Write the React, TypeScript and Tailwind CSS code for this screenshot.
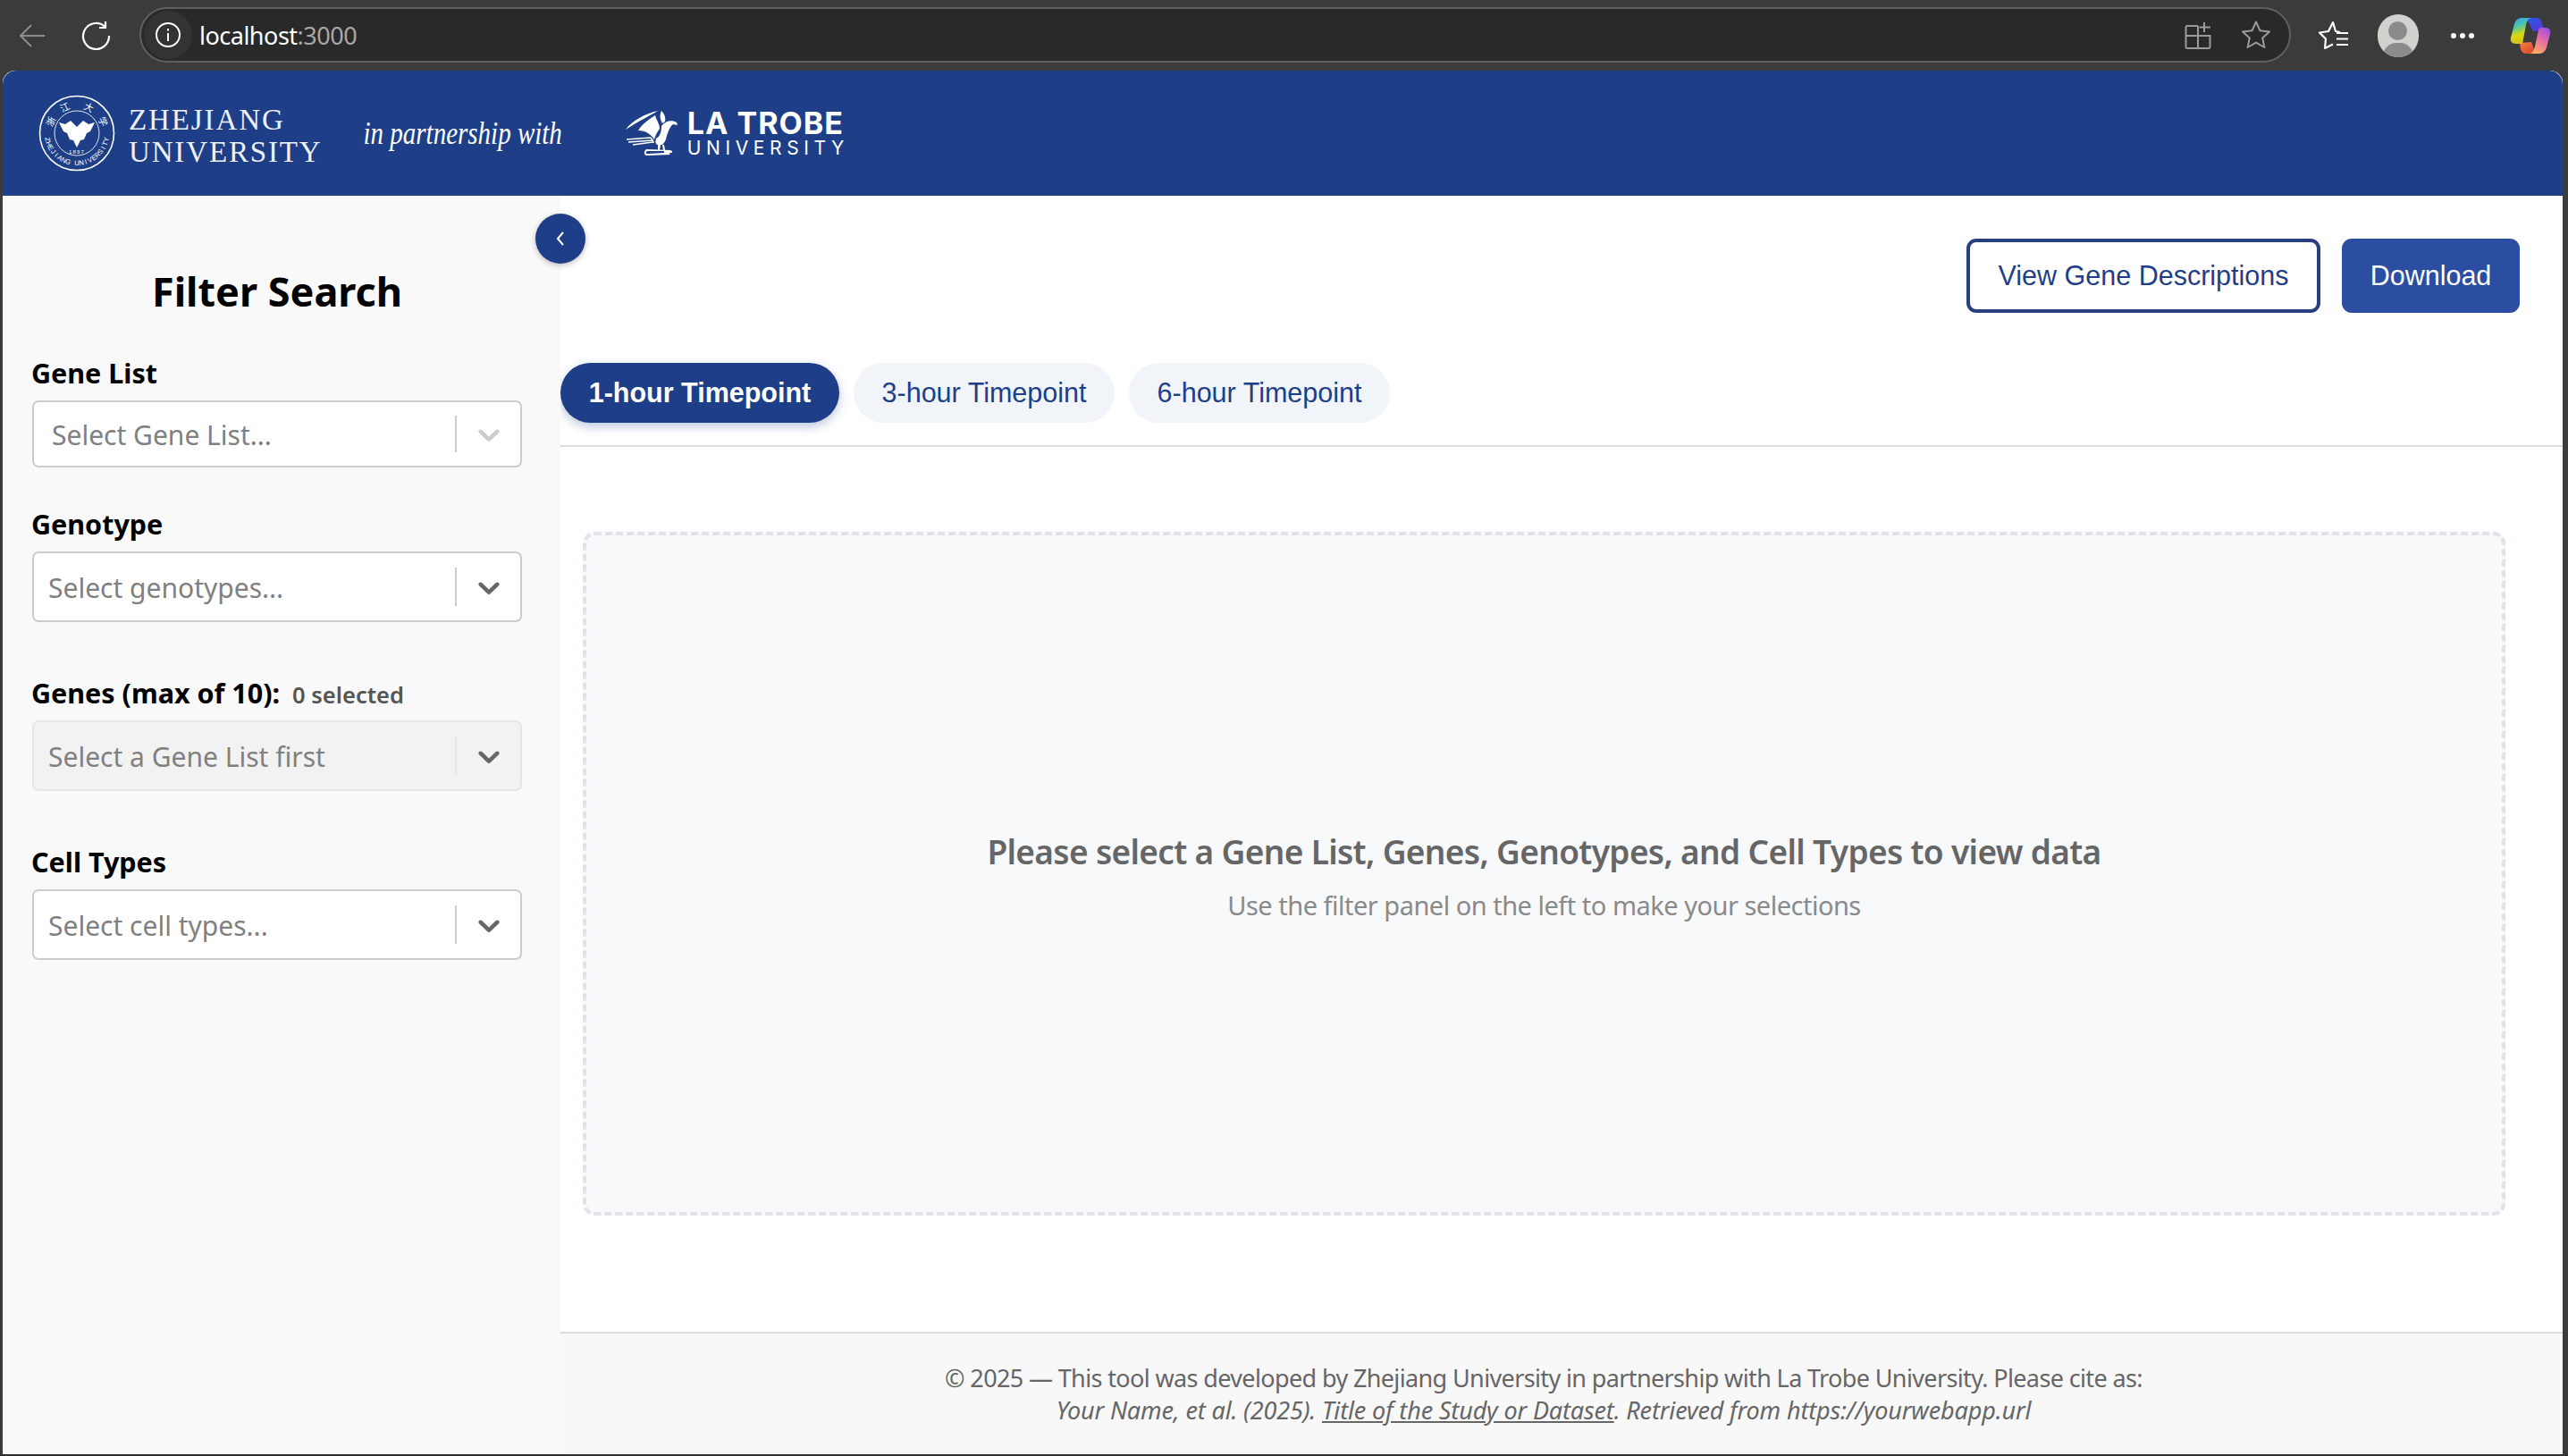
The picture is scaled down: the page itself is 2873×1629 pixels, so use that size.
import React from "react";

const noto = "font-['Noto_Sans','Open_Sans',sans-serif]";
const arial = "font-['Liberation_Sans',Arial,sans-serif]";

function Chevron({ light }: { light?: boolean }) {
  return (
    <svg width="40" height="40" viewBox="0 0 20 20" fill={light ? "#cccccc" : "#666666"}>
      <path d="M4.516 7.548c.436-.446 1.043-.481 1.576 0L10 11.295l3.908-3.747c.533-.481 1.141-.446 1.574 0 .436.445.408 1.197 0 1.615-.406.418-4.695 4.502-4.695 4.502a1.095 1.095 0 0 1-1.576 0S4.924 9.581 4.516 9.163c-.409-.418-.436-1.17 0-1.615z" />
    </svg>
  );
}

function Select({ text, h, pad, light, disabled }: { text: string; h: string; pad: string; light?: boolean; disabled?: boolean }) {
  return (
    <div className={`flex ${h} w-[548px] items-center rounded-[7px] border-2 ${disabled ? "border-[#e6e6e6] bg-[#f2f2f2]" : "border-[#cccccc] bg-white"}`}>
      <span className={`flex-1 ${pad} pt-[2px] text-[30px] leading-[40px] text-[#808080]`}>{text}</span>
      <span className={`h-[58%] w-[2px] ${disabled ? "bg-[#e6e6e6]" : "bg-[#cccccc]"}`} />
      <span className="flex w-[71px] items-center justify-center"><Chevron light={light} /></span>
    </div>
  );
}

function Label({ children }: { children: React.ReactNode }) {
  return <div className="mb-[9px] ml-[-1px] flex h-[40px] items-center pb-[2px] text-[30.5px] font-bold text-black">{children}</div>;
}

const sealName = "ZHEJIANG UNIVERSITY".split("");
const sealCjk: [string, number][] = [["浙", -66], ["江", -25], ["大", 25], ["学", 66]];

function Seal() {
  return (
    <svg width="86" height="86" viewBox="0 0 86 86" className="shrink-0">
      <circle cx="43" cy="43" r="41.5" fill="none" stroke="#fff" strokeWidth="1.6" />
      <circle cx="43" cy="43" r="25" fill="none" stroke="#fff" strokeWidth="1" opacity="0.85" />
      {sealCjk.map(([c, a]) => (
        <text key={c} x="43" y="15" transform={`rotate(${a} 43 43)`} fill="#fff" fontSize="10.5" textAnchor="middle" fontFamily="'Noto Sans CJK SC',sans-serif">{c}</text>
      ))}
      {sealName.map((c, i) => (
        <text key={i} x="43" y="79" transform={`rotate(${78 - i * 8.67} 43 43)`} fill="#fff" fontSize="7.6" textAnchor="middle" fontFamily="'Liberation Sans',sans-serif">{c}</text>
      ))}
      <text x="43" y="66" fill="#fff" fontSize="6" textAnchor="middle" letterSpacing="1.2" fontFamily="'Liberation Sans',sans-serif">1897</text>
      <path fill="#fff" d="M23 31 L30 33 L36 29 L43 36 L50 29 L56 33 L63 31 L58 41 L54 43 L51 50 L47 51 L43 59 L39 51 L35 50 L32 43 L28 41 Z" />
    </svg>
  );
}

function Eagle() {
  return (
    <svg width="62" height="50" viewBox="0 0 62 50" className="shrink-0">
      <g fill="#fff">
        <path d="M0 21 C7 11 22 3 36 0 C28 5 15 11 0 21 Z" />
        <path d="M14 22 C20 13 27 9 33 5 C34 10 38 14 38 20 C35 24 33 28 32 32 C28 26 22 22 14 22 Z" />
        <path d="M40 0 C43 3 45 7 44 12 L41 14 C38 9 38 4 40 0 Z" />
        <path d="M40 17 C44 11 52 10 57 13 L58 16 L53 15 C50 17 48 22 46 28 C45 33 43 36 41 38 L35 38 C33 36 33 34 34 31 C38 29 40 24 40 17 Z" />
        <path d="M36 38 L39 38 L38 44 L36 44 Z M41 38 L43 38 L44 44 L42 44 Z" />
        <path d="M23 43 L50 44 C53 45 53 47 50 47 C48 47 49 48 50 49 L24 50 C20 50 20 45 23 43 Z M24 45 C22 46 22 48 25 48 L43 47 L43 45 Z" fillRule="evenodd" />
      </g>
      <g stroke="#fff" strokeWidth="1.6" fill="none">
        <path d="M1 32 L28 30 M3 35 L30 33 M8 38 L30 35 M28 30 C30 32 31 34 31 36" />
      </g>
    </svg>
  );
}

function Copilot() {
  return (
    <svg width="46" height="44" viewBox="0 0 46 44">
      <defs>
        <linearGradient id="cpA" x1="0" y1="0" x2="0.25" y2="1">
          <stop offset="0" stopColor="#3b9bf5" />
          <stop offset="0.38" stopColor="#4bc6a8" />
          <stop offset="0.7" stopColor="#d8d810" />
          <stop offset="1" stopColor="#d8c020" />
        </linearGradient>
        <linearGradient id="cpB" x1="0.8" y1="0" x2="0.3" y2="1">
          <stop offset="0" stopColor="#a04fe0" />
          <stop offset="0.5" stopColor="#e870a0" />
          <stop offset="1" stopColor="#fbb060" />
        </linearGradient>
        <linearGradient id="cpC" x1="0" y1="0" x2="1" y2="1">
          <stop offset="0" stopColor="#2060e8" />
          <stop offset="1" stopColor="#6030d0" />
        </linearGradient>
        <linearGradient id="cpD" x1="0" y1="0" x2="1" y2="1">
          <stop offset="0" stopColor="#f08040" />
          <stop offset="1" stopColor="#d83a30" />
        </linearGradient>
      </defs>
      <path fill="url(#cpC)" d="M14 2 H29 C33 2 35 4 36 8 L39 16 L26 17 L22 9 C21 6 19 3 14 2 Z" />
      <path fill="url(#cpD)" d="M11 30 L24 29 L27 37 C28 39 30 41 32 42 H19 C15 42 13 40 12 37 Z" />
      <path fill="url(#cpA)" d="M13 2 H24 C20 3 19 6 18 10 L14 31 H7 C2 31 0 28 1 24 L5 9 C6 5 9 2 13 2 Z" />
      <path fill="url(#cpB)" d="M34 13 H40 C44 13 46 16 45 20 L41 35 C40 39 37 42 33 42 H22 C26 41 27 38 28 34 L31 20 C32 16 32 14 34 13 Z" />
    </svg>
  );
}

function Browser() {
  return (
    <div className="flex h-[79px] shrink-0 items-center text-white">
      <svg className="ml-[20px]" width="32" height="32" viewBox="0 0 32 32" fill="none" stroke="#8c8c8c" strokeWidth="2">
        <path d="M30 16 H3 M15 4 L3 16 L15 28" />
      </svg>
      <svg className="ml-[39px]" width="34" height="34" viewBox="0 0 34 34" fill="none" stroke="#fff" strokeWidth="2.2">
        <path d="M26 6.5 A14.5 14.5 0 1 0 31 17" />
        <path d="M27 1 V8 H20" />
      </svg>
      <div className="mb-[1px] ml-[31px] flex h-[62px] w-[2407px] items-center rounded-full border-2 border-[#5f5f5f] bg-[#292929]">
        <div className="ml-[3px] flex h-[54px] w-[54px] items-center justify-center rounded-full bg-[#333333]">
          <svg width="30" height="30" viewBox="0 0 30 30" fill="none" stroke="#fff" strokeWidth="2">
            <circle cx="15" cy="15" r="13" />
            <path d="M15 13 V22 M15 8 V10.5" />
          </svg>
        </div>
        <span className={`ml-[8px] text-[27px] leading-none tracking-[-0.5px] ${noto}`}>
          localhost<span className="text-[#a8a8a8]">:3000</span>
        </span>
        <div className="ml-auto mr-[20px] flex items-center gap-[33px]">
          <svg width="30" height="32" viewBox="0 0 30 32" fill="none" stroke="#9a9a9a" strokeWidth="2">
            <path d="M15 6 H3 Q1.5 6 1.5 7.5 V29 Q1.5 31 3 31 H27 Q28.5 31 28.5 29 V17 H1.5 M15 6 V31" />
            <path d="M22 2 V13 M16.5 7.5 H29" />
          </svg>
          <svg width="34" height="34" viewBox="0 0 34 34" fill="none" stroke="#9a9a9a" strokeWidth="2" strokeLinejoin="round">
            <path d="M17 2.5 L21.4 12.2 L32 13.4 L24.2 20.5 L26.4 31 L17 25.7 L7.6 31 L9.8 20.5 L2 13.4 L12.6 12.2 Z" />
          </svg>
        </div>
      </div>
      <svg className="ml-[31px]" width="34" height="34" viewBox="0 0 34 34" fill="none" stroke="#fff" strokeWidth="2.2" strokeLinejoin="round">
        <path d="M24 13 L19 12 L16 2 L11 12 L1 13.5 L8 20.5 L7 31 L16 26.5" />
        <path d="M20 14 H33 M20 20.5 H33 M20 27 H33" />
      </svg>
      <div className="relative ml-[32px] h-[48px] w-[46px] overflow-hidden rounded-full bg-[#d1d1cd]">
        <div className="absolute left-[12px] top-[8px] h-[21px] w-[21px] rounded-full bg-[#8b8b89]" />
        <div className="absolute left-[6px] top-[32px] h-[30px] w-[34px] rounded-full bg-[#8b8b89]" />
      </div>
      <div className="ml-[36px] flex gap-[4px]">
        <span className="h-[6px] w-[6px] rounded-full bg-white" />
        <span className="h-[6px] w-[6px] rounded-full bg-white" />
        <span className="h-[6px] w-[6px] rounded-full bg-white" />
      </div>
      <div className="ml-[40px]"><Copilot /></div>
    </div>
  );
}

function Header() {
  return (
    <header className="flex h-[140px] shrink-0 items-center rounded-t-[15px] bg-[#1e3f87] pl-[40px] text-white">
      <Seal />
      <div className="ml-[15px] mt-[6px] font-['Liberation_Serif',serif] text-[33px] leading-[36px] text-[#eef1f8]">
        <div className="tracking-[1.9px]">ZHEJIANG</div>
        <div className="tracking-[1.85px]">UNIVERSITY</div>
      </div>
      <div className="ml-[46px] scale-y-[1.2] whitespace-nowrap font-['Liberation_Serif',serif] text-[29px] italic leading-none">in partnership with</div>
      <div className="ml-[71px]"><Eagle /></div>
      <div className="ml-[7px] font-['Inter',sans-serif] text-white">
        <div className="text-[34px] font-bold leading-[34px] tracking-[1px]">LA TROBE</div>
        <div className="text-[21px] font-normal leading-[22px] tracking-[5.6px]">UNIVERSITY</div>
      </div>
    </header>
  );
}

function Sidebar() {
  return (
    <aside className={`relative w-[624px] shrink-0 bg-[#f9f9f9] pl-[33px] pt-[79px] ${noto}`}>
      <button className="absolute right-[-28px] top-[20px] z-10 flex h-[56px] w-[56px] items-center justify-center rounded-full bg-[#1e3f87] shadow-[0_2px_6px_rgba(0,0,0,0.25)]">
        <svg width="14" height="18" viewBox="0 0 14 18" fill="none" stroke="#fff" strokeWidth="2">
          <path d="M10 2 L4 9 L10 16" />
        </svg>
      </button>
      <h2 className="h-[56px] w-[548px] text-center text-[45px] font-bold leading-[56px] text-black">Filter Search</h2>
      <div className="mt-[45px]">
        <Label>Gene List</Label>
        <Select text="Select Gene List..." h="h-[75px]" pad="pl-[20px]" light />
      </div>
      <div className="mt-[45px]">
        <Label>Genotype</Label>
        <Select text="Select genotypes..." h="h-[79px]" pad="pl-[16px]" />
      </div>
      <div className="mt-[61px]">
        <Label>
          Genes (max of 10):
          <span className="ml-[14px] mt-[2px] text-[25.5px] font-semibold text-[#555555]">0 selected</span>
        </Label>
        <Select text="Select a Gene List first" h="h-[79px]" pad="pl-[16px]" disabled />
      </div>
      <div className="mt-[61px]">
        <Label>Cell Types</Label>
        <Select text="Select cell types..." h="h-[79px]" pad="pl-[16px]" />
      </div>
    </aside>
  );
}

function Tab({ label, active }: { label: string; active?: boolean }) {
  return (
    <button className={`h-[67px] w-[292px] rounded-full text-[30.5px] ${active ? "w-[312px] bg-[#1e3f87] font-bold text-white shadow-[0_4px_12px_rgba(30,63,135,0.3)]" : "bg-[#f1f4f9] text-[#1e3f87]"}`}>
      {label}
    </button>
  );
}

function Main() {
  return (
    <main className="flex min-w-0 flex-1 flex-col bg-white">
      <div className={`flex justify-end gap-[24px] pr-[48px] pt-[48px] ${arial}`}>
        <button className="h-[83px] w-[396px] rounded-[11px] border-[4px] border-[#2a3f80] bg-white text-[30.5px] text-[#1e3f87]">View Gene Descriptions</button>
        <button className="h-[83px] w-[199px] rounded-[11px] bg-[#2b4ea3] text-[30.5px] text-white">Download</button>
      </div>
      <div className={`mt-[56px] flex gap-[16px] border-b-2 border-[#dddddd] pb-[25px] ${arial}`}>
        <Tab label="1-hour Timepoint" active />
        <Tab label="3-hour Timepoint" />
        <Tab label="6-hour Timepoint" />
      </div>
      <div className={`ml-[25px] mr-[64px] mt-[95px] flex h-[765px] flex-col items-center justify-center rounded-[13px] border-[4px] border-dashed border-[#e0e3e8] bg-[#f8f9fb] pt-[7px] ${noto}`}>
        <div className="text-[37px] font-semibold leading-[48px] tracking-[-0.65px] text-[#666666]">
          Please select a Gene List, Genes, Genotypes, and Cell Types to view data
        </div>
        <div className="mt-[16px] text-[29px] leading-[40px] tracking-[-0.5px] text-[#8a8a8a]">
          Use the filter panel on the left to make your selections
        </div>
      </div>
      <footer className={`mt-auto flex h-[137px] flex-col items-center justify-center border-t-2 border-[#dddddd] bg-[#f8f8f8] pr-[40px] text-[27px] leading-[36px] text-[#666666] ${noto}`}>
        <div className="tracking-[-0.63px]">© 2025 — This tool was developed by Zhejiang University in partnership with La Trobe University. Please cite as:</div>
        <div className="italic tracking-[-0.15px]">
          Your Name, et al. (2025). <span className="underline">Title of the Study or Dataset</span>. Retrieved from https://yourwebapp.url
        </div>
      </footer>
    </main>
  );
}

export default function App() {
  return (
    <div className="flex h-[1629px] w-full flex-col overflow-hidden border-b-2 border-[#2f2f2f] bg-[#3b3b3b]">
      <Browser />
      <div className="ml-[3px] mr-[6px] flex h-[1548px] flex-col overflow-hidden rounded-t-[14px] bg-white">
        <Header />
        <div className="flex min-h-0 flex-1">
          <Sidebar />
          <Main />
        </div>
      </div>
    </div>
  );
}
